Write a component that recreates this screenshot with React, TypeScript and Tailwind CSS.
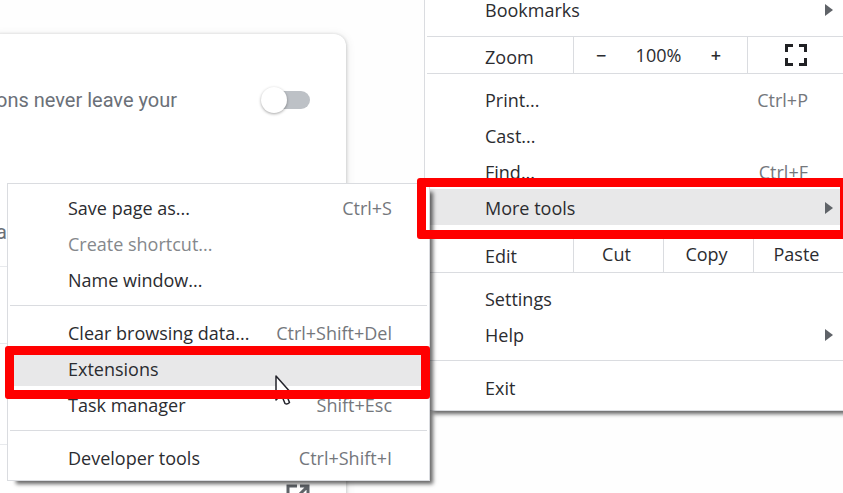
import { useState } from 'react';
import type { ReactNode } from 'react';
import { clsx } from 'clsx';

interface MenuItem {
  label: string;
  shortcut?: string;
  submenu?: boolean;
  active?: boolean;
  disabled?: boolean;
}

const saveItems: MenuItem[] = [
  { label: 'Save page as...', shortcut: 'Ctrl+S' },
  { label: 'Create shortcut...', disabled: true },
  { label: 'Name window...' },
];

const manageItems: MenuItem[] = [
  { label: 'Clear browsing data...', shortcut: 'Ctrl+Shift+Del' },
  { label: 'Extensions', active: true },
  { label: 'Task manager', shortcut: 'Shift+Esc' },
];

const printItems: MenuItem[] = [
  { label: 'Print...', shortcut: 'Ctrl+P' },
  { label: 'Cast...' },
  { label: 'Find...', shortcut: 'Ctrl+F' },
  { label: 'More tools', submenu: true, active: true },
];

const menuBox =
  'absolute border border-[#dadce0] bg-white px-0.5 shadow-[6px_6px_4px_-3px_rgba(0,0,0,0.6)]';

function Row({ item, children }: { item: MenuItem; children?: ReactNode }) {
  return (
    <div className="relative">
      <button
        type="button"
        role="menuitem"
        disabled={item.disabled}
        className={clsx(
          'flex h-9 w-full items-center pt-0.5 pl-[58px] pr-[35px] text-left',
          item.active && 'bg-[#e8e8e9]',
          item.disabled ? 'text-[#85888c]' : 'text-[#2b2c30]',
        )}
      >
        <span className="flex-1">{item.label}</span>
        {item.shortcut && <span className="text-[#74777c]">{item.shortcut}</span>}
        {item.submenu && (
          <svg width="8" height="12" viewBox="0 0 8 12" className="-mr-[25px]">
            <path d="M0 0L8 6L0 12Z" fill="#5f6368" />
          </svg>
        )}
      </button>
      {children}
    </div>
  );
}

function Separator() {
  return <div role="separator" className="h-px bg-[#dadce0]" />;
}

// Red frame drawn around the row the reader should click
function Highlight({ className }: { className: string }) {
  return (
    <div
      className={clsx('pointer-events-none absolute z-20 rounded-[3px] border-[9px] border-[#ff0000]', className)}
    />
  );
}

function Cursor() {
  return (
    <svg width="18" height="31" viewBox="0 0 18 31" className="pointer-events-none absolute left-[265px] top-[25px] z-10">
      <path
        d="M1 1V25L6.5 20L10 28.5Q12 30 14.5 27.5L11 19H17Z"
        fill="#fff"
        stroke="#23232b"
        strokeWidth="1.5"
        strokeLinejoin="round"
      />
    </svg>
  );
}

function SettingsCard() {
  const [enabled, setEnabled] = useState(false);

  return (
    <main className="-ml-1 w-[350px] rounded-r-xl bg-white text-xl text-[#6b7078] shadow-[0_1px_3px_1px_rgba(60,64,67,0.2),0_2px_9px_2px_rgba(60,64,67,0.08)] font-[Roboto,sans-serif]">
      <label className="flex h-[132px] items-center justify-between pr-9">
        <span>ons never leave your</span>
        <input
          type="checkbox"
          checked={enabled}
          onChange={(e) => setEnabled(e.target.checked)}
          className="relative h-[18px] w-[43px] appearance-none rounded-full bg-[#bdc1c6] before:absolute before:-left-1.5 before:-top-1 before:size-[26px] before:rounded-full before:bg-white before:shadow-[0_1px_3px_rgba(0,0,0,0.35)] checked:before:left-6"
        />
      </label>
      <div className="flex h-[101px] items-center border-b border-[#e8eaed] pt-8">a</div>
      <div className="h-[77px] border-b border-[#e8eaed]" />
      <div className="h-[101px] border-b border-[#e8eaed]" />
      <div className="flex h-[101px] items-center justify-end pr-9">
        <a href="#open" aria-label="Open in new tab">
          <svg width="24" height="24" viewBox="0 0 24 24" fill="none" stroke="#5f6368" strokeWidth="3">
            <path d="M11 2H2V22H22V13M14 2H22V10M22 2L9 15" />
          </svg>
        </a>
      </div>
    </main>
  );
}

function FullscreenIcon() {
  return (
    <svg width="22" height="22" viewBox="0 0 22 22" fill="none" stroke="#202124" strokeWidth="3">
      <path d="M1.5 8V1.5H8M14 1.5H20.5V8M20.5 14V20.5H14M8 20.5H1.5V14" />
    </svg>
  );
}

function MainMenu() {
  return (
    <div role="menu" className={clsx(menuBox, '-top-2.5 left-[424px] -right-[3px]')}>
      <div className="pb-[9px]">
        <Row item={{ label: 'Bookmarks', submenu: true }} />
      </div>
      <Separator />
      <div className="flex h-9 items-stretch text-[#2b2c30]">
        <span className="flex w-[146px] items-center pt-1 pl-[58px]">Zoom</span>
        <div className="flex flex-1 items-center justify-between border-x border-[#dadce0] pl-[22px] pr-[26px]">
          <button type="button" aria-label="Zoom out" className="font-semibold">
            −
          </button>
          <span>100%</span>
          <button type="button" aria-label="Zoom in" className="font-semibold">
            +
          </button>
        </div>
        <button type="button" aria-label="Full screen" className="flex w-[95px] items-center justify-center">
          <FullscreenIcon />
        </button>
      </div>
      <Separator />
      <div className="pt-[7px] pb-2.5">
        {printItems.map((item) => (
          <Row key={item.label} item={item}>
            {item.active && <Highlight className="-left-2.5 -right-1.5 -top-[11px] -bottom-3.5" />}
          </Row>
        ))}
      </div>
      <Separator />
      <div className="flex h-9 items-stretch text-[#2b2c30]">
        <span className="flex w-[146px] items-center pt-1 pl-[58px]">Edit</span>
        {['Cut', 'Copy', 'Paste'].map((label) => (
          <button key={label} type="button" className="flex-1 border-l border-[#dadce0] pr-1">
            {label}
          </button>
        ))}
      </div>
      <Separator />
      <div className="pt-[7px] pb-2">
        <Row item={{ label: 'Settings' }} />
        <Row item={{ label: 'Help', submenu: true }} />
      </div>
      <Separator />
      <div className="pt-2 pb-[5px]">
        <Row item={{ label: 'Exit' }} />
      </div>
    </div>
  );
}

function MoreToolsMenu() {
  return (
    <div role="menu" className={clsx(menuBox, 'left-[7px] top-[183px] w-[423px]')}>
      <div className="pt-[5px] pb-2">
        {saveItems.map((item) => (
          <Row key={item.label} item={item} />
        ))}
      </div>
      <Separator />
      <div className="py-2">
        {manageItems.map((item) => (
          <Row key={item.label} item={item}>
            {item.active && (
              <>
                <Cursor />
                <Highlight className="-left-[5px] -right-[3px] -top-1 -bottom-[13px]" />
              </>
            )}
          </Row>
        ))}
      </div>
      <Separator />
      <div className="pt-2 pb-[5px]">
        <Row item={{ label: 'Developer tools', shortcut: 'Ctrl+Shift+I' }} />
      </div>
    </div>
  );
}

export default function App() {
  return (
    <div className="relative h-screen overflow-hidden bg-[#fefefe] pt-[34px] font-['Open_Sans',sans-serif] text-[18px] leading-6">
      <SettingsCard />
      <MainMenu />
      <MoreToolsMenu />
    </div>
  );
}
